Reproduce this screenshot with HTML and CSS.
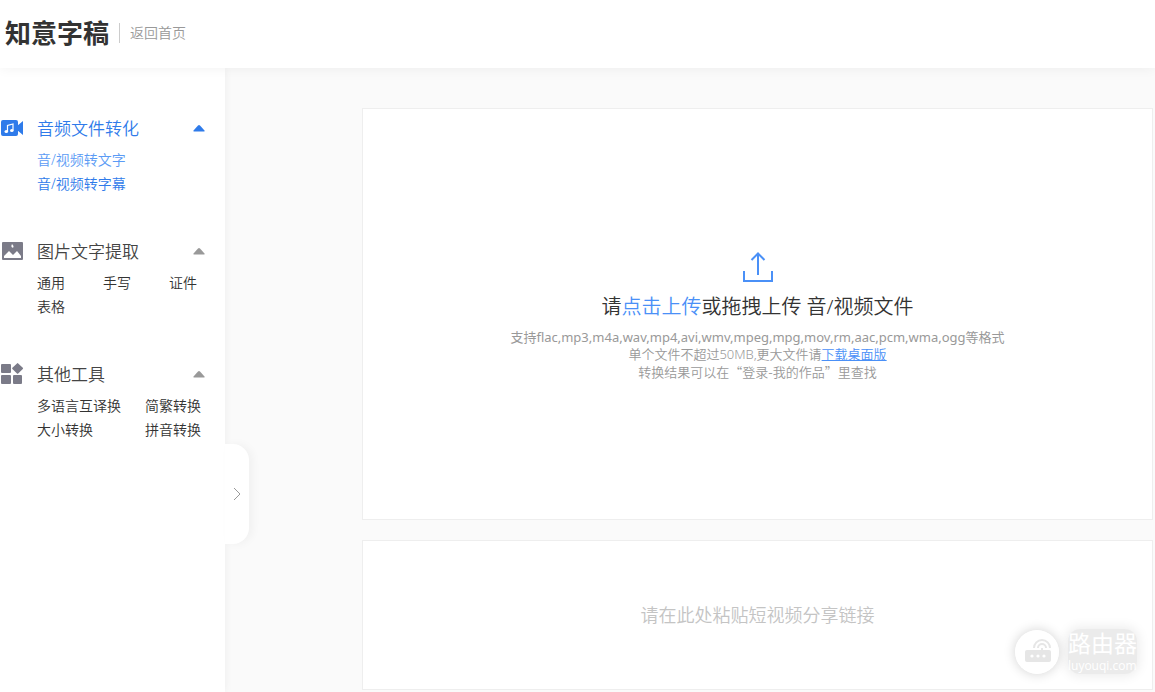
FILE: index.html
```html
<!DOCTYPE html>
<html lang="zh-CN">
<head>
<meta charset="utf-8">
<meta name="viewport" content="width=device-width, initial-scale=1">
<title>知意字稿</title>
<link rel="stylesheet" href="styles.css">
</head>
<body>
<header class="header">
  <h1 class="brand">知意字稿</h1>
  <a class="home-link" href="#">返回首页</a>
</header>
<div class="layout">
  <aside class="sidebar">
    <nav class="menu">
      <section class="group group-active">
        <button class="group-title" type="button" aria-expanded="true">
          <svg class="group-icon" viewBox="0 0 24 24" aria-hidden="true"><path fill="currentColor" d="M3 4h13a2 2 0 0 1 2 2v12a2 2 0 0 1-2 2H3a2 2 0 0 1-2-2V6a2 2 0 0 1 2-2zM17 10l6-5v14l-6-5z"/><path d="M7.500 15.500V9.500l5.500-1.500v6.500" fill="none" stroke="#fff" stroke-width="1.200"/><ellipse cx="6.300" cy="15.500" rx="1.800" ry="1.500" fill="#fff"/><ellipse cx="11.800" cy="14.500" rx="1.800" ry="1.500" fill="#fff"/></svg>
          <span class="group-name">音频文件转化</span>
          <svg class="caret" viewBox="0 0 12 7" aria-hidden="true"><path fill="currentColor" d="M5 .5q1-1 2 0l4.500 5q.5 1-1 1h-9q-1.500 0-1-1z"/></svg>
        </button>
        <div class="links links-stack">
          <a class="current" href="#">音/视频转文字</a>
          <a href="#">音/视频转字幕</a>
        </div>
      </section>
      <section class="group">
        <button class="group-title" type="button" aria-expanded="true">
          <svg class="group-icon" viewBox="0 0 24 24" aria-hidden="true"><rect x="2" y="3" width="21" height="18" rx="1" fill="#7b7b88"/><path fill="#fff" d="M4 19v-2l5-5 4 4 4-4 4 5v2z"/><path fill="#fff" d="M12 5q2 2 1.500 3-.5 1.500-2 0Q11 7 12 5z"/></svg>
          <span class="group-name">图片文字提取</span>
          <svg class="caret" viewBox="0 0 12 7" aria-hidden="true"><path fill="currentColor" d="M5 .5q1-1 2 0l4.500 5q.5 1-1 1h-9q-1.500 0-1-1z"/></svg>
        </button>
        <div class="links links-three">
          <a href="#">通用</a>
          <a href="#">手写</a>
          <a href="#">证件</a>
          <a href="#">表格</a>
        </div>
      </section>
      <section class="group">
        <button class="group-title" type="button" aria-expanded="true">
          <svg class="group-icon" viewBox="0 0 24 24" aria-hidden="true"><g fill="#7b7b88"><rect x="1" y="2" width="10" height="9" rx="1"/><rect x="1" y="13" width="10" height="9" rx="1"/><rect x="13" y="13" width="9" height="9" rx="1"/><path d="M17 1.400q.6-.6 1.200 0l4.600 4.400q.6.600 0 1.200l-4.600 4.400q-.6.600-1.200 0L12.400 7q-.6-.6 0-1.200z"/></g></svg>
          <span class="group-name">其他工具</span>
          <svg class="caret" viewBox="0 0 12 7" aria-hidden="true"><path fill="currentColor" d="M5 .5q1-1 2 0l4.500 5q.5 1-1 1h-9q-1.500 0-1-1z"/></svg>
        </button>
        <div class="links links-two">
          <a href="#">多语言互译换</a>
          <a href="#">简繁转换</a>
          <a href="#">大小转换</a>
          <a href="#">拼音转换</a>
        </div>
      </section>
    </nav>
    <button class="drawer" type="button" aria-label="展开">
      <svg class="drawer-icon" viewBox="0 0 8 14" aria-hidden="true"><path d="M1 1l6 6-6 6" fill="none" stroke="#999"/></svg>
    </button>
  </aside>
  <main class="content">
    <section class="upload">
      <svg class="upload-icon" viewBox="0 0 32 32" aria-hidden="true"><path d="M16 24V3M9.500 9L16 2.500 22.500 9M2 20v10h28V20" fill="none" stroke="#4a90f7" stroke-width="2"/></svg>
      <p class="upload-title">请<a href="#">点击上传</a>或拖拽上传 音/视频文件</p>
      <div class="notes">
        <p class="formats">支持flac,mp3,m4a,wav,mp4,avi,wmv,mpeg,mpg,mov,rm,aac,pcm,wma,ogg等格式</p>
        <p>单个文件不超过50MB,更大文件请<a href="#">下载桌面版</a></p>
        <p class="cjk">转换结果可以在“登录-我的作品”里查找</p>
      </div>
    </section>
    <input class="share" type="text" aria-label="短视频分享链接" placeholder="请在此处粘贴短视频分享链接">
  </main>
</div>
<div class="watermark">
  <svg class="mark-icon" viewBox="0 0 44 44" aria-hidden="true"><circle cx="22" cy="22" r="22" fill="#fff"/><rect x="10" y="20" width="26" height="12" rx="2" fill="#e6e6e6"/><path d="M27 21v-3M23 18a4 4 0 0 1 8 0M19 18a8 8 0 0 1 16 0" fill="none" stroke="#e6e6e6" stroke-width="2"/><g fill="#fff"><circle cx="17" cy="26" r="1.600"/><circle cx="23" cy="26" r="1.600"/><circle cx="29" cy="26" r="1.600"/></g></svg>
  <div class="mark-text">
    <span class="mark-name">路由器</span>
    <span class="mark-site">luyouqi.com</span>
  </div>
</div>
</body>
</html>
```
FILE: styles.css
```css
* {
  box-sizing: border-box;
}

body {
  display: flex;
  flex-direction: column;
  min-height: 100vh;
  margin: 0;
  overflow: hidden;
  background: #fafafa;
  color: #333;
  font: 350 14px/24px "Noto Sans", "Noto Sans CJK SC", sans-serif;
}

p,
h1 {
  margin: 0;
}

a {
  color: inherit;
  text-decoration: none;
}

button {
  border: 0;
  padding: 0;
  background: none;
  color: inherit;
  font: inherit;
  cursor: pointer;
}

.header {
  position: relative;
  z-index: 2;
  display: flex;
  align-items: center;
  gap: 10px;
  height: 68px;
  padding: 0 5px 2px;
  background: #fff;
  box-shadow: 0 0 12px rgba(0, 0, 0, 0.06);
}

.brand {
  font-size: 26px;
  line-height: 36px;
}

.home-link {
  border-left: 1px solid #ccc;
  padding-left: 10px;
  color: #999;
  line-height: 20px;
}

.layout {
  display: flex;
  flex: 1;
}

.sidebar {
  position: relative;
  z-index: 1;
  flex: none;
  width: 225px;
  background: #fff;
  box-shadow: 0 0 8px rgba(0, 0, 0, 0.06);
}

.menu {
  display: flex;
  flex-direction: column;
  gap: 43px;
  padding-top: 48px;
}

.group-title {
  display: flex;
  align-items: center;
  width: 100%;
  height: 24px;
  padding-right: 20px;
  color: #444;
  font-size: 17px;
  text-align: left;
}

.group-icon {
  width: 24px;
  height: 24px;
  margin-right: 13px;
}

.group-name {
  flex: 1;
  padding-top: 2px;
}

.caret {
  width: 12px;
  height: 7px;
  color: #999;
}

.links {
  display: grid;
  padding: 8px 0 0 37px;
}

.links-three {
  grid-template-columns: repeat(3, 66px);
}

.links-two {
  grid-template-columns: 108px auto;
}

.group-active,
.group-active .group-title,
.group-active .caret {
  color: #2f7bea;
}

.group-active .current {
  color: #5b9bf5;
}

.drawer {
  position: absolute;
  top: 376px;
  left: 100%;
  display: flex;
  align-items: center;
  justify-content: center;
  width: 24px;
  height: 100px;
  border-radius: 0 16px 16px 0;
  background: #fff;
  box-shadow: 4px 0 8px rgba(0, 0, 0, 0.04);
}

.drawer-icon {
  width: 8px;
  height: 14px;
}

.content {
  display: flex;
  flex: 1;
  flex-direction: column;
  gap: 20px;
  min-width: 0;
  padding: 40px 2px 2px 137px;
}

.upload {
  display: flex;
  flex-direction: column;
  align-items: center;
  justify-content: center;
  min-height: 412px;
  padding-top: 2px;
  border: 1px solid #eee;
  background: #fff;
  text-align: center;
}

.upload-icon {
  width: 32px;
  height: 32px;
}

.upload-title {
  margin: 8px 0 6px;
  font-size: 20px;
  line-height: 32px;
}

.upload-title a {
  color: #4a90f7;
}

.notes {
  color: #999;
  font-size: 13px;
  line-height: 17px;
}

.notes a {
  color: #4a90f7;
  text-decoration: underline;
}

.formats {
  font-weight: 400;
}

.cjk {
  font-family: "Noto Sans CJK SC", sans-serif;
}

.share {
  width: 100%;
  height: 150px;
  border: 1px solid #eee;
  background: #fff;
  color: #333;
  font: 350 18px/24px "Noto Sans", "Noto Sans CJK SC", sans-serif;
  text-align: center;
}

.share::placeholder {
  color: #c4c4c4;
}

.watermark {
  position: absolute;
  right: 18px;
  bottom: 18px;
  z-index: 3;
  display: flex;
  align-items: center;
  gap: 9px;
  color: #fff;
  font-weight: 400;
  pointer-events: none;
}

.mark-icon {
  width: 44px;
  height: 44px;
  border-radius: 50%;
  box-shadow: 0 0 12px rgba(0, 0, 0, 0.18);
}

.mark-text {
  display: flex;
  flex-direction: column;
  border-radius: 12px;
  background: rgba(0, 0, 0, 0.08);
  box-shadow: 0 0 12px 2px rgba(0, 0, 0, 0.08);
}

.mark-name {
  font-size: 23px;
  line-height: 28px;
}

.mark-site {
  font-family: "Open Sans", sans-serif;
  font-size: 12px;
  line-height: 17px;
}
```
